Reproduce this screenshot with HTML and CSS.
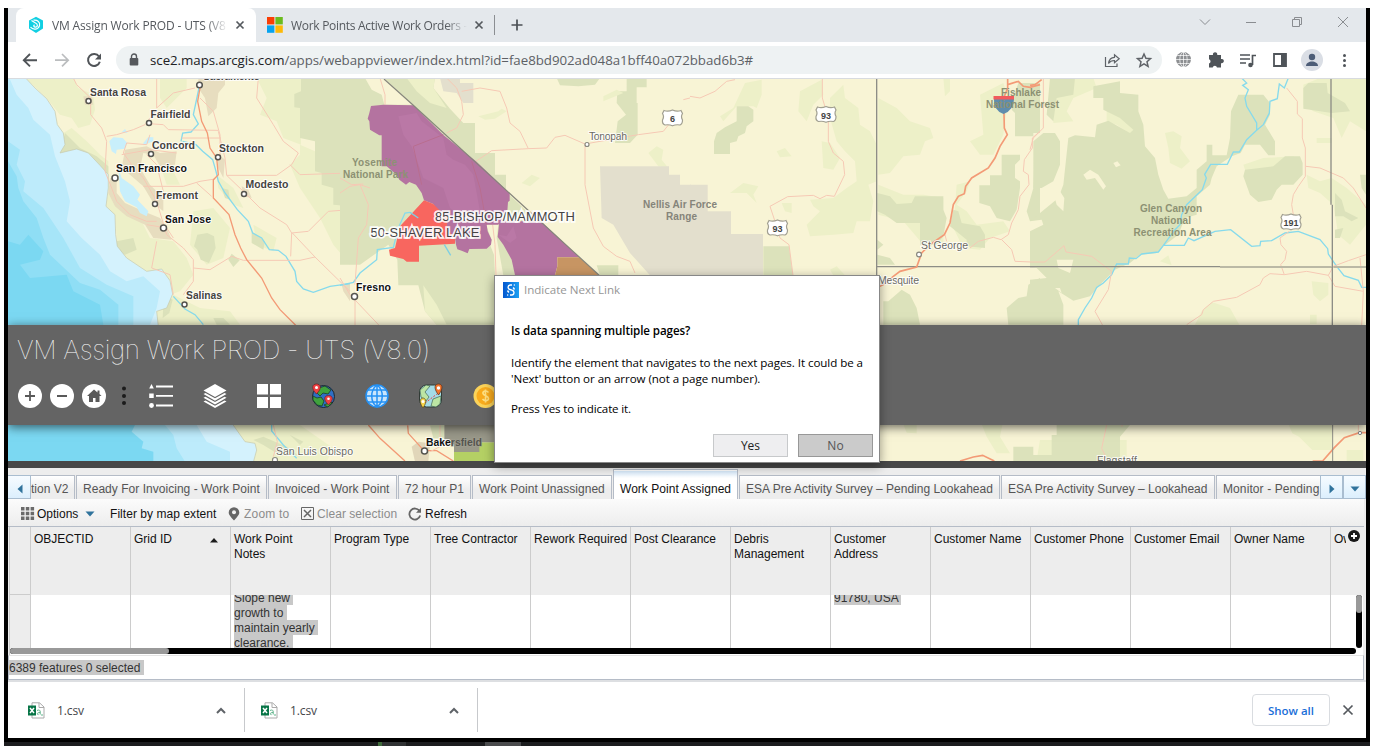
FILE: index.html
```html
<!DOCTYPE html>
<html lang="en">
<head>
<meta charset="utf-8">
<title>VM Assign Work PROD - UTS (V8.0)</title>
<link rel="stylesheet" href="styles.css">
</head>
<body>
<div class="browser">
  <header class="tabstrip">
    <div class="btab active">
      <svg class="fav" width="16" height="18" viewBox="0 0 16 18"><path d="M1 4.500 8 .8l7 3.700v8L8 17l-7-4.500z" fill="#12cfe2"/><path d="M3.500 4.500l4 2.500c2.500 1 2.500 4 0 4.200-1.800 0-2.300-1.500-1-2.500M5.500 4.200c4-.5 7 2 6 5.500-1 4-6.500 4.500-9 1.500" fill="none" stroke="#fff" stroke-width="1.200"/></svg>
      <span class="btitle t1">VM Assign Work PROD - UTS (V8</span>
      <svg class="x" width="10" height="10" viewBox="0 0 10 10"><path d="M1.500 1.500l7 7m0-7l-7 7" stroke="#55595e" stroke-width="1.700"/></svg>
    </div>
    <div class="btab second">
      <svg class="fav" width="16" height="16" viewBox="0 0 16 16"><path fill="#f93e05" d="M0 0h7.400v7.400H0z"/><path fill="#6abb1e" d="M8.400 0h7.400v7.400H8.400z"/><path fill="#06a3ef" d="M0 8.400h7.400v7.400H0z"/><path fill="#fdb907" d="M8.400 8.400h7.400v7.400H8.400z"/></svg>
      <span class="btitle t2">Work Points Active Work Orders -</span>
      <svg class="x" width="10" height="10" viewBox="0 0 10 10"><path d="M1.500 1.500l7 7m0-7l-7 7" stroke="#55595e" stroke-width="1.700"/></svg>
    </div>
    <svg class="plus" width="14" height="14" viewBox="0 0 14 14"><path d="M7 1.500v11M1.500 7h11" stroke="#4b4f54" stroke-width="1.700"/></svg>
    <svg class="winctl" width="160" height="16" viewBox="1195 14 160 16" fill="none" stroke="#8a8d91"><path d="M1200 19.500l5 5 5-5M1246 22.500h10M1292.500 19.500h7v7h-7zM1294.500 19v-1.500h7v7h-2M1338 17l10 10m0-10l-10 10"/></svg>
  </header>
  <div class="urlbar">
    <svg class="nav" width="100" height="30" viewBox="14 45 100 30" fill="none"><path d="M37 60.200H24m6-6.200l-6.200 6.200 6.200 6.200" stroke="#505458" stroke-width="1.900"/><path d="M55 60.200h13m-6-6.200l6.200 6.200-6.200 6.200" stroke="#bbbdbf" stroke-width="1.700"/><path d="M99 56.500a6 6 0 1 0 .8 5.200" stroke="#505458" stroke-width="2"/><path d="M101 53.500v6h-6z" fill="#505458"/></svg>
    <div class="omnibox">
      <svg width="10" height="14" viewBox="0 0 10 14"><rect x=".7" y="5" width="8.600" height="7.500" rx="1" fill="#56595d"/><path d="M2.500 6V3.500a2.500 2.500 0 0 1 5 0V6" fill="none" stroke="#56595d" stroke-width="1.400"/></svg>
      <span class="url"><b>sce2.maps.arcgis.com</b>/apps/webappviewer/index.html?id=fae8bd902ad048a1bff40a072bbad6b3#</span>
      <svg class="oicons" width="50" height="18" viewBox="1103 51 50 18" fill="none" stroke="#5f6368" stroke-width="1.200"><path d="M1105.500 57v9.500h11.500v-3M1108.500 63.500c.5-4 3-6 6-6.200v-2.500l4.700 4-4.700 4v-2.300c-3-.1-4.500.8-6 3z"/><path d="M1144 54l1.900 4.300 4.600.4-3.500 3.100 1.100 4.600-4.100-2.500-4.100 2.500 1.100-4.600-3.500-3.100 4.600-.4z" stroke-width="1.500"/></svg>
    </div>
    <svg class="ext" width="186" height="26" viewBox="1170 47 186 26"><g fill="none" stroke="#fff" stroke-width=".7"><circle cx="1183.500" cy="59.500" r="7.500" fill="#8d8f92" stroke="none"/><ellipse cx="1183.500" cy="59.500" rx="3.700" ry="7.300"/><path d="M1183.500 52v15M1176 59.500h15M1177.500 55.500h12M1177.500 63.500h12"/></g><path fill="#4f5459" d="M1210 55h3a2.200 2.200 0 1 1 4.200 0h3.800v4a2.200 2.200 0 1 1 0 4.200v4.300h-4a2.200 2.200 0 0 0-4.300 0H1209v-4a2.200 2.200 0 0 0 0-4.200V55z"/><path d="M1240 55h10M1240 59h10M1240 63h6M1252.500 65V55.500h3.500" fill="none" stroke="#4f5459" stroke-width="1.700"/><circle cx="1250.500" cy="65" r="2.300" fill="#4f5459"/><path d="M1274 54h12v12h-12z" fill="none" stroke="#4f5459" stroke-width="1.800"/><path d="M1281 54h5v12h-5z" fill="#4f5459"/><circle cx="1312" cy="60" r="11" fill="#dadee5"/><circle cx="1312" cy="57" r="3.200" fill="#4d5d77"/><path d="M1306 66c0-6 12-6 12 0z" fill="#4d5d77"/><g fill="#4f5459"><circle cx="1344.500" cy="55.500" r="1.500"/><circle cx="1344.500" cy="60.500" r="1.500"/><circle cx="1344.500" cy="65.500" r="1.500"/></g></svg>
  </div>

  <main class="map">
    <svg class="basemap" width="1358" height="382" viewBox="8 79 1358 382">
      <rect x="8" y="79" width="1358" height="382" fill="#f8f4d5"/>
      <!-- California: ocean and terrain -->
      <g transform="translate(0 78) scale(.33333)">
        <g fill="#edf0c8">
          <path d="M77 0H220L235 30 280 50 285 95 270 140 235 150 215 120 180 110 140 60z"/>
          <path d="M190 165L215 150 260 190 300 230 325 250 325 290 265 225 180 225z"/>
          <path d="M325 345L345 345 360 380 420 420 450 480 520 490 560 540 580 590 540 640 510 650 485 575 440 580 380 540 352 500 345 410 318 385z"/>
          <path d="M700 0L770 0 800 60 780 110 830 130 850 180 903 200V0zM900 200L945 220 970 280 1025 340 1050 385V560L1000 500 960 420 900 330 870 260 900 230z"/>
          <path d="M580 400L640 390 690 450 670 540 620 560 570 500zM650 290L700 330 730 390 700 380 655 330zM480 260L520 280 540 320 500 320zM470 700L520 650 600 690 690 700 720 740H470z"/>
          <path d="M760 440L830 480 820 520 770 500zM480 0H560V30L500 90 480 60z"/>
        </g>
        <g fill="#dce2bb"><path d="M903 0H1050V385L1000 380V330L965 320V285L945 280V190L900 180V90L883 88V48L903 40z"/><path d="M592 470l30-5 20 10 5 35-20 45-25-10-10-30-10-10zM755 460l40 30-5 25-35-20zM685 545l10-18 24 20-19 20z"/><path d="M350 490l50-10 10 35-35 15-25-10zM665 330l20 5 5 30-15-5zM195 165L240 210 290 235 325 265 325 290 265 225 180 225zM490 680l20-20 8 5-10 40-20 15zM640 720l30 0 20 20h-40z"/></g>
        <g fill="#e7ddbf"><path d="M595 0h80v20l-20 25-5 45-25 25-10-55-20-30zM330 300L350 300 350 345 375 375 430 400 480 420 500 450 515 485 460 480 435 440 380 415 345 385 325 345zM375 215L440 205 480 225 530 220 525 260 480 265 460 230 430 225 420 270 450 320 490 360 490 400 460 375 430 325 390 290 365 270zM250 55l25 0 5 25-25 0z"/><path d="M650 225l25 20-5 55-15-30zM725 325l20 10 10 25-25-5zM1025 620l25-5v55l-20-30z"/></g>
        <path fill="#d4f2fd" stroke="#c5c9ac" stroke-width="2" d="M77 0L105 30 140 62 165 100 172 140 190 165 195 200 180 225 230 213 265 225 300 262 325 290 325 330 318 385 345 410 347 470 352 505 380 540 440 580 485 573 510 608 518 648 500 690 470 700 475 745 20 745V0z"/>
        <path fill="#bdebfb" d="M24 0H28L50 50 85 90 100 125 150 170 165 235 195 310 210 370 200 430 245 480 300 530 330 580 380 610 430 595 480 640 470 690 450 740H24z"/>
        <path fill="#a6e5f8" d="M24 190L60 215 50 260 75 310 70 340 130 390 190 480 240 570 320 620 400 655 400 740H24z"/>
        <path fill="#8fdef5" d="M24 250L50 295 55 330 70 370 110 420 130 480 150 530 240 615 300 635 355 680 355 740H24z"/>
        <path fill="#7bd8f2" d="M24 490L60 500 85 470 130 520 120 545 60 560 90 600 200 590 220 640 300 680 310 740H24z"/>
        <path fill="#c8effb" d="M328 190L340 178 368 180 382 195 375 212 350 215 348 228 335 220zM355 270L365 300 400 325 420 350 412 365 445 400 440 415 420 405 410 388 375 370 360 340 358 310zM430 195L445 177 460 178 460 190 430 202zM365 163L375 153 383 165z"/>
        <g fill="none" stroke="#86daec" stroke-width="4"><path d="M597 30L580 110 595 138 573 162 548 165 543 190M548 190L588 200 608 220 638 245 648 280 655 310 675 345 712 395 745 430 758 465 785 480 808 515 835 517 858 535 885 580 890 610 910 633 940 643 990 625 1050 617M520 655L555 693 585 710 610 740"/></g>
        <g fill="none" stroke="#f6c9b5" stroke-width="3"><path d="M220 0L230 20 272 60V110L305 150 320 190 315 280 335 330 350 370 390 410 440 430 470 430M470 0V90L520 45 585 30M470 95L435 140 400 155 350 170 320 175M447 137L490 140 505 155 655 157M545 180H663M655 160L675 240 680 292H830L875 260 895 225 850 190 820 140 770 60 775 0M680 292L735 345 780 390 860 440 875 465 925 460 985 400 1050 395M450 170L440 200 380 195 370 225 395 260 430 300 470 370 485 420 500 470 550 510 580 545V610L550 650M430 325H550L600 310 645 303M590 315L635 355M600 60L640 100 660 170V235M580 570L630 575 695 535 730 547H900L945 537 1050 640M875 465L872 535M877 465L945 537M470 490L455 570 510 590 520 650M440 440L500 450 520 480M365 230L450 215 530 225M440 230L470 260 490 340M870 260L900 290 1050 285"/></g>
        <path fill="none" stroke="#f39a76" stroke-width="4" d="M600 30L593 70 605 130 622 165 630 210 650 240 655 290 640 305 640 360 687 410 705 470 722 510 740 545 785 600 815 660 840 695 890 745"/>
      </g>
      <!-- Sierra Nevada and western Nevada -->
      <g transform="translate(340 78) scale(.33333)">
        <path fill="#dce2bb" d="M0 0H285L280 30 330 92 370 135H405V225H465V290H498V340L560 400 606 432 500 440 525 592H470V740H290L255 700 235 622H175L172 545 145 500 60 560H0zM650 0H780L765 20 715 25 660 22zM860 0H920V28H890V75H893V170L870 195H825L833 130 858 110 830 75 832 40H860zM770 562H835V592H780z"/>
        <path fill="#f8f4d5" d="M75 0H132L218 80H133L125 50 95 35zM438 440H475L470 480 490 592H465L462 530 450 500 455 485z"/>
        <path fill="#edf0c8" d="M415 115L475 100 485 92 500 100 465 122 435 125zM545 315L575 290 600 300 570 325zM925 225L950 205 970 215 965 245 985 270 955 265zM250 622L290 680 320 740H290L255 700zM790 55L830 35 850 45 790 70zM200 0H285L280 30 320 90 270 75 230 40z"/>
        <g fill="#e3dfcd"><path d="M300 0H360V15H400V75H370L350 45 310 40zM780 265H987V290H1020V320H1053V592H930L870 525 820 440 785 420z"/></g>
        <path fill="none" stroke="#86daec" stroke-width="4" d="M0 622L40 613 60 585 110 545 112 515 160 508 175 450 195 405 210 403"/>
        <g fill="none" stroke="#f6c9b5" stroke-width="3"><path d="M120 0L135 50V80M320 0L350 30 365 70 370 110 350 150 320 165M365 40L420 30 480 40 500 90 510 135 540 160 565 212 620 210 645 178 675 172 735 198 895 170 970 160 990 135M1030 65L1050 60M0 345L30 325 60 320 90 330M60 320L85 380 80 440 55 480 45 620M0 600L30 650 120 745M45 655V745M400 255L455 218 565 212M735 200L735 320 760 450 790 505 830 535 870 550 885 585M458 440L465 500 468 592M0 300L35 320 70 318"/></g>
        <path fill="#b473a0" d="M93 84L130 80 220 82 311 172 408 250 509 345V368L504 372 502 400 475 440H440L443 460 455 485 453 500 440 512 388 513 383 526 365 518 352 514 348 500 345 480 320 455 320 435 290 395 280 378 252 367 245 345 228 320 208 312 198 320 178 305 170 290 140 265 125 265V172H118L90 155 88 130 83 122 88 105zM478 430H603L718 538H652V565L645 592H525L515 545 490 500 473 477z"/>
        <path fill="#ba78a6" d="M175 115L230 105 245 130 310 180 320 230 340 245 375 260 400 290 420 400 410 440 380 430 330 390 310 330 250 300 215 205 190 170zM475 470L500 475 520 445 530 480 510 495z"/>
        <path d="M220 205L310 170M395 250L420 330 440 440M220 205L245 320" fill="none" stroke="#b96d8f" stroke-width="3"/>
        <path fill="#f8665f" d="M252 367L280 378 322 420 320 455 345 477V497L237 503V551H200L190 543 150 533 147 515 165 510 180 445z"/>
        <path fill="#c79563" d="M652 538H718L778 592H645L652 565z"/>
        <path d="M210 403L235 420M313 500L332 532" stroke="#7ecfe3" stroke-width="4" fill="none"/>
      </g>
      <!-- Eastern Nevada and south-western Utah -->
      <g transform="translate(690 78) scale(.33333)">
        <path fill="#edf0c8" d="M165 15L215 5 215 50 200 90 190 85 175 85 140 85 100 130 90 115 130 90zM330 40L395 5 400 50 370 80 350 130 325 100zM420 60L460 20 465 60 505 90 510 140 540 160 560 200 560 310 535 320 550 370 540 430 500 430 490 465 430 470 360 475 350 440 390 400 370 385 360 365 430 360 470 330 500 310 495 250 465 220 440 190 420 120zM395 190L420 195 450 240 430 275 400 270zM120 345L160 315 205 325 190 350 200 375 170 345zM260 220L285 210 305 235 270 238zM565 60L620 90 660 130 720 150 730 180 705 190 690 230 640 235 600 285 565 290zM565 320L640 350 700 350 760 360 760 500 700 500 640 430 565 410zM870 50L940 15 955 60 940 170 910 230 870 230 840 190 880 170zM760 0H780V40L765 55zM800 320L840 310 830 340 800 380 830 400 860 440 940 430 960 460 900 480 870 515 820 510 790 450zM275 375H305V405L285 400zM420 575L440 565 465 592H430z"/>
        <g fill="#dce2bb"><path d="M140 85H175L190 95V130L170 145 165 165 145 175 140 190 120 195V228H72V190L80 165 105 148 140 130zM562 345L600 355 620 378 665 375 675 355H760V395L770 420 760 475 740 500H690V435L620 435 585 410 562 400zM790 395L805 400 815 435 870 445 885 470V510L830 505V485L780 445zM935 230H990V245L975 260V300L990 310V330L980 395 960 430 920 420 900 385 868 375V322H900V292H935zM970 60L985 15H1050V165H1030V175H975V105L965 95zM1035 200L1050 195V430H1020L1010 400 1030 330zM562 485L580 500 562 515zM562 530L600 540 615 560H562zM595 670L635 635 660 650 680 690 690 740H580V670zM955 740L950 690 985 660 1010 655 1015 620 1050 600V740z"/><path d="M220 505H297L309 592H220z"/></g>
        <path fill="#e3dfcd" d="M0 320H53V400H123V468H219V592H0z"/>
        <g fill="none" stroke="#f6c9b5" stroke-width="3"><path d="M0 55L30 60 75 40 110 10 135 5M397 0V60L415 120V190L430 225 460 250 464 290 433 355 410 352 390 362 370 352 293 356 240 385 255 430 270 480 297 500 309 592M1050 160L1027 180V210L1003 245 1000 280 1015 290 1017 320 990 355 985 395 965 435 955 470 933 485 910 478 865 490 840 510M935 485L965 515 975 550 1050 553M765 470L770 490"/></g>
        <path fill="none" stroke="#8d8d86" stroke-width="4" d="M560 0V592M560 566H1050"/>
        <path fill="none" stroke="#f39a76" stroke-width="5" d="M953 0V30L941 60 943 150 952 170 930 205 915 240 895 270 845 300 827 325 823 347 805 355 790 380 780 435 763 470 720 500 695 525 680 567 630 580 610 595 580 620 565 627M953 20L985 10 1000 25 1020 28 1050 20"/>
      </g>
      <!-- South-eastern Utah and the Four Corners -->
      <g transform="translate(1030 78) scale(.33333)">
        <path fill="#edf0c8" d="M135 0H190L200 30 130 60 110 100 130 130 70 135 70 60zM230 100L260 110 310 150 305 170 260 140 230 130zM405 165L430 160 455 175 450 210 480 250 455 272 420 255 415 210zM640 260L700 240 790 235 810 260 740 290 650 290zM820 20L870 0H1008V160L960 130 935 180 910 120 850 100 820 80zM830 290L870 310 905 300 950 330 1008 380V440L960 500 925 470 910 380 870 345 835 330zM860 180H905V195H860zM845 610L895 615V650L870 670 850 650zM515 700L545 672 600 690 628 740H495zM390 550L415 532 425 562zM840 710H860V738H840z"/>
        <path fill="#dce2bb" d="M60 0H135L130 50 80 60 70 130 50 110zM190 0L190 25 270 10V45L325 50 325 100 340 140 345 205 375 240 385 290 400 335 415 362 470 355 500 330V275L530 250V200H547V232H590L600 180 603 100 625 50H700L720 75V110L705 140 735 190V232H715L690 200H645L632 225 605 235 560 265 545 300 540 320 500 355V410L465 420 445 470 400 505 380 525 330 530 300 555 255 575 215 615 180 655 130 668 85 640 100 680V740H0V605L50 600 20 570 0 565V430L85 360 100 320 115 180 135 172 195 178 200 140 235 128 300 165 310 155 270 120 220 95V60H190V30zM10 190L40 165H75L90 190V260L70 310 35 330H10zM645 275L730 265 765 235H810L818 255V290L790 320H755L740 335 725 365 685 372 660 350 640 295zM915 345L935 365 945 400 985 420 965 430 940 415H915zM820 30L835 15H890L893 45 945 75 960 100 905 105 870 100 820 92zM990 290H1008V350L995 330zM915 455L940 450 930 480H915z"/>
        <path fill="#f8f4d5" d="M250 255L262 250 272 262 258 268zM160 290L180 275 205 290 228 325 220 335 195 300 170 305zM70 345L90 340 103 360 100 400 80 380zM0 430L35 425 40 440 0 460zM80 545H130L120 585 85 570zM75 630L90 630 95 645z"/>
        <g fill="none" stroke="#86daec" stroke-width="4"><path d="M635 0L650 15 638 22 655 35 645 60 650 85 680 135V157L650 185 628 222H610L592 259H542L524 289 529 300 517 335 470 380 455 410 450 440 435 455 420 475 398 505 385 522 335 528 318 542 298 540 295 558 260 558 245 590 220 615 200 628 185 660 165 690 145 725V742M680 157L700 140 718 105 720 70 742 62 748 18 763 30 775 0M400 502H463L475 480 492 488 555 460 602 455 665 505 690 503 692 490 725 488 765 465 805 460 870 485 893 512 895 528 920 565 942 593 985 607 995 628H1008"/></g>
        <g fill="none" stroke="#f6c9b5" stroke-width="3"><path d="M40 0V150L10 180 0 215M770 30L802 70V108L817 122V180L826 210V295L805 325 790 350 785 380 790 410M778 460L750 480 753 500 770 520 765 545 752 560 763 590M828 265L870 270 940 300 970 330 1008 390M470 740L515 710 520 695 550 670 620 658 690 620 700 600 720 587 763 590 830 580 895 592 915 625 1000 640M895 592L910 565 955 548 1008 530M0 552H45L102 503 108 522 185 535 245 580 235 635 195 700 218 742M990 540L1000 640 995 742"/></g>
        <path fill="none" stroke="#8d8d86" stroke-width="4" d="M903 0V380M907 380V742M0 566H570M570 568H908"/><path stroke="#bbb9a5" stroke-width="6" fill="none" d="M570 567H905M910 567H1008"/>
        <path fill="none" stroke="#f39a76" stroke-width="5" d="M0 22L15 20 35 5"/>
      </g>
      <!-- Coast and valley south of the header bar -->
      <g transform="translate(0 325) scale(.33333)">
        <path fill="#edf0c8" d="M700 300H900L1000 370 980 410H760z"/>
        <path fill="#dce2bb" d="M760 345L790 335 860 365 900 395 870 385 830 385 790 360zM870 330L910 350 900 360z"/>
        <path fill="#d4f2fd" stroke="#c5c9ac" stroke-width="2" d="M20 295H696L735 350 765 355 770 375 760 412H20z"/>
        <path fill="#bdebfb" d="M24 300H590L620 350 690 380 690 410H24z"/><path fill="#a6e5f8" d="M24 300H495L520 330 530 370 555 410H24z"/><path fill="#7bd8f2" d="M24 300H405L395 320 430 350 425 370 460 380V410H24z"/>
        <path fill="#e1d6b9" d="M1235 365l20-15 35 5-5 55h-40z"/><path fill="#dce2bb" d="M1290 300H1333V340H1300z"/><path fill="#b4d064" d="M1362 352h126v60h-126z"/><path fill="#999889" d="M1333 300H1488V352H1438V381H1362V358H1333z"/>
        <path stroke="#86daec" stroke-width="4" fill="none" d="M815 300V318L850 360 890 400"/><path stroke="#f39a76" stroke-width="4" fill="none" d="M1105 300L1140 340 1215 408M1223 300L1225 325 1272 377H1310L1360 408"/><path stroke="#f6c9b5" stroke-width="3" fill="none" d="M820 300L832 350 820 395M1110 300H1290M1320 300V365L1290 380"/>
      </g>
      <!-- Northern Arizona -->
      <g transform="translate(870 420) scale(.33333)">
        <path fill="#edf0c8" d="M330 0h70l-10 50 30 50h-40l-30-50zM510 60h260v60H500zM1250 0h137v90l-60 0-40-40-20-10zM1430 90h50v33h-50zM95 0H140V40L110 38z"/><path fill="#dce2bb" d="M560 15H780L750 50V123H430V80H490V105H545V45H560z"/>
        <path fill="none" stroke="#f6c9b5" stroke-width="3" d="M710 15l-15 70 10 20M756 0v20M1465 0v35"/><path fill="none" stroke="#f39a76" stroke-width="5" d="M270 123l40-12 28-5 35 17M1328 123h30l35-40 30-30 45-15h20"/><path fill="none" stroke="#8d8d86" stroke-width="3" d="M1388 0v123"/>
        <circle cx="1470" cy="39" r="5" fill="#fff" stroke="#888" stroke-width="3"/>
      </g>
      <path d="M384 79L413 105 600 276" stroke="#86867c" stroke-width="1.200" fill="none"/>
      <g fill="#fff" stroke="#55544f" stroke-width="1.500"><circle cx="88.500" cy="101" r="2.500"/><circle cx="199.500" cy="85" r="2.800"/><circle cx="149" cy="123" r="2.500"/><circle cx="151" cy="154" r="2.500"/><circle cx="218" cy="157.300" r="2.500"/><circle cx="115" cy="178" r="3"/><circle cx="244" cy="194" r="2.500"/><circle cx="155" cy="204" r="2.500"/><circle cx="163.500" cy="228" r="3"/><circle cx="184.500" cy="304.500" r="2.500"/><circle cx="354.500" cy="296.500" r="3"/><circle cx="424.500" cy="451" r="3"/><g stroke="#88877e" stroke-width="1.200"><circle cx="587" cy="144.500" r="2"/><circle cx="919" cy="254.500" r="2.400"/><circle cx="275" cy="460" r="2.500"/></g></g>
      <g fill="#fff" stroke="#a19f91" stroke-width="1.200"><path d="M664 110.500q4 1.500 8.500-.5 4.500 2 8.500.5l1.500 3q-2 3 0 6.500 0 4-2.500 5-4-.8-7.500.8-3.500-1.600-7.500-.8-3-1-2.500-5 2-3.500 0-6.500z"/><path transform="translate(153.500 -3.500)" d="M664 110.500q4 1.500 8.500-.5 4.500 2 8.500.5l1.500 3q-2 3 0 6.500 0 4-2.500 5-4-.8-7.500.8-3.500-1.600-7.500-.8-3-1-2.500-5 2-3.500 0-6.500z"/><path transform="translate(105 110)" d="M664 110.500q4 1.500 8.500-.5 4.500 2 8.500.5l1.500 3q-2 3 0 6.500 0 4-2.500 5-4-.8-7.500.8-3.500-1.600-7.500-.8-3-1-2.500-5 2-3.500 0-6.500z"/><path transform="translate(618.500 104)" d="M664 110.500q4 1.500 8.500-.5 4.500 2 8.500.5l1.500 3q-2 3 0 6.500 0 4-2.500 5-4-.8-7.500.8-3.500-1.600-7.500-.8-3-1-2.500-5 2-3.500 0-6.500z"/></g>
      <path d="M994 99h20q0 11-10.500 15Q993 110 994 99z" fill="#5f8dad"/><path d="M993.500 96h20.500v3.500h-20.500z" fill="#f15b5d"/>
      <g class="shield"><text x="672.500" y="122">6</text><text x="826" y="118.500">93</text><text x="777.500" y="232">93</text><text x="1291" y="226">191</text></g>
      <g class="lbl city"><text x="90" y="96" textLength="56">Santa Rosa</text><text x="203" y="79.500" textLength="57">Sacramento</text><text x="150.500" y="118" textLength="40">Fairfield</text><text x="152" y="149" textLength="43">Concord</text><text x="219" y="152" textLength="45">Stockton</text><text x="245.500" y="188" textLength="43">Modesto</text><text x="156" y="198.500" textLength="42">Fremont</text><text x="186" y="299" textLength="36">Salinas</text></g>
      <g class="lbl major"><text x="116" y="172" textLength="71">San Francisco</text><text x="165" y="222.500" textLength="46">San Jose</text><text x="356" y="291" textLength="35">Fresno</text><text x="426" y="445.500" textLength="56"><tspan>Bake</tspan><tspan class="faded">rsfield</tspan></text></g>
      <g class="lbl town"><text x="589" y="139.500" textLength="38">Tonopah</text><text x="921" y="249" textLength="47">St George</text><text x="878" y="284" textLength="41">Mesquite</text><text x="276" y="454.500" textLength="77">San Luis Obispo</text><text x="1097" y="464" textLength="40">Flagstaff</text></g>
      <g class="park"><text x="352" y="165.500" textLength="45">Yosemite</text><text x="343" y="178" textLength="65">National Park</text><text x="1001" y="96" textLength="40">Fishlake</text><text x="986" y="108" textLength="73">National Forest</text><text x="1140" y="211.500" textLength="62">Glen Canyon</text><text x="1151" y="223.500" textLength="40">National</text><text x="1133.500" y="235.500" textLength="78">Recreation Area</text></g>
      <g class="park base"><text x="643" y="207.500" textLength="74">Nellis Air Force</text><text x="666" y="219.500" textLength="31">Range</text></g>
      <g class="zone"><text x="435" y="221" textLength="140">85-BISHOP/MAMMOTH</text><text x="370.500" y="237" textLength="109">50-SHAVER LAKE</text></g>
    </svg>

    <section class="apphead">
      <h1>VM Assign Work PROD - UTS (V8.0)</h1>
      <svg class="tools" width="490" height="30" viewBox="8 381 490 30">
        <g fill="#fff"><circle cx="30" cy="396" r="12"/><circle cx="62" cy="396" r="12"/><circle cx="94" cy="396" r="12"/></g>
        <path d="M25 396h10m-5-5v10M57 396h10" stroke="#595959" stroke-width="1.800"/><path d="M94 389.500l-7 6.500h2v6h4v-4h2.500v4h4v-6h2l-2-2v-3.500h-2v2z" fill="#595959"/>
        <g fill="#1b1b1b"><circle cx="124" cy="388.500" r="2"/><circle cx="124" cy="396" r="2"/><circle cx="124" cy="403" r="2"/></g>
        <path d="M156 386.500h17M156 395.800h17M156 405.500h17" stroke="#fff" stroke-width="1.800"/><path fill="#fff" d="M151.500 384l2.300 4.500h-4.600zM149.200 393.500h4.500v4.500h-4.500z"/><circle cx="151.500" cy="405.500" r="2.400" fill="#fff"/>
        <g fill="#fff"><path d="M215 384l11.500 6.500-11.500 6.500-11.500-6.500zM203.500 394l2-1 9.500 5.300 9.500-5.300 2 1-11.500 6.700zM203.500 397.700l2-1 9.500 5.300 9.500-5.300 2 1-11.500 6.700zM203.500 401.400l2-1 9.500 5.300 9.500-5.300 2 1-11.500 6.700z"/><path d="M257 384h11v10.500h-11zM270 384h11v10.500h-11zM257 397h11v11h-11zM270 397h11v11h-11z"/></g>
        <circle cx="323.500" cy="396.500" r="11" fill="#2f6fc4" stroke="#1d2630" stroke-width="1"/><path d="M313 396l4 2 4-1 3 4-2 5-5-1-4-5zM319 388l6-2 6 4-3 4-5-1-3 3-3-3zM324 405l7-3 1 1-4 4z" fill="#40a23d" stroke="#1c3d27" stroke-width=".8"/><path d="M316.500 394c-6-6-4-10 0-10s6 4 0 10zM328.500 405c-6-6-4-9.500 0-9.500s6 3.500 0 9.500z" fill="#ef4043" stroke="#6a1a1a" stroke-width=".6"/><g fill="#fff"><circle cx="316.500" cy="387.500" r="1.500"/><circle cx="328.500" cy="398.800" r="1.300"/></g>
        <circle cx="377" cy="396" r="11" fill="#c9e5fc" stroke="#2491f4" stroke-width="1.500"/><path d="M377 385v22M366 396h22M368 390h18M368 402h18M377 385c-7 5-7 17 0 22 7-5 7-17 0-22" stroke="#2491f4" stroke-width="1.500" fill="none"/>
        <rect x="419.500" y="385" width="22" height="22" rx="7" fill="#a4dbe6" stroke="#313a35"/><path d="M420 390l6-5 4 1-5 6 4 5-3 4-5-4zM431 406l2-7 8-3-1 8-4 3z" fill="#bce5a4" stroke="#446451" stroke-width=".7"/><path d="M425 403l12-9" stroke="#e4434b" stroke-dasharray="2 1.500"/><path d="M438.500 395c-6-8-3-11 0-11s6 3 0 11z" fill="#f3752c" stroke="#5a2c15" stroke-width=".7"/><path d="M423 408c-5-7-2-10 0-10s5 3 0 10z" fill="#f7d54a" stroke="#57491a" stroke-width=".7"/><g fill="#fff"><circle cx="438.500" cy="388" r="1.700"/><circle cx="423" cy="401.500" r="1.500"/></g>
        <circle cx="485.500" cy="396" r="12" fill="#fbd35a"/><circle cx="485.500" cy="396" r="9" fill="#f9ab1d"/><path d="M488.500 392.500c-2-2.500-6-1.500-5.500 1 .5 2.700 5.500 2 5.500 5 0 2.500-4 3-6 .5M485.500 389.500v13" stroke="#ffe082" stroke-width="1.600" fill="none"/>
      </svg>
    </section>
  </main>
  <div class="splitter"></div>

  <section class="panel">
    <nav class="ptabs">
      <span class="arrow left"><svg width="6" height="10" viewBox="0 0 6 10"><path d="M5.500 .5v9L.5 5z" fill="#30739c"/></svg></span>
      <span class="pt w1">tion V2</span><span class="pt w2">Ready For Invoicing - Work Point</span><span class="pt w3">Invoiced - Work Point</span><span class="pt w4">72 hour P1</span><span class="pt w5">Work Point Unassigned</span><span class="pt w6 sel">Work Point Assigned</span><span class="pt w7">ESA Pre Activity Survey – Pending Lookahead</span><span class="pt w8">ESA Pre Activity Survey – Lookahead</span><span class="pt w9">Monitor - Pending</span>
      <span class="arrow"><svg width="6" height="10" viewBox="0 0 6 10"><path d="M.5 .5v9l5-4.500z" fill="#30739c"/></svg></span><span class="arrow last"><svg width="10" height="6" viewBox="0 0 10 6"><path d="M.5 .5h9L5 5.500z" fill="#30739c"/></svg></span>
    </nav>
    <div class="ptools">
      <svg class="g1" width="14" height="13" viewBox="0 0 14 13" fill="#6a6a6a"><path d="M0 0h3.500v3.500H0zM4.800 0h3.500v3.500H4.800zM9.600 0h3.500v3.500H9.600zM0 4.700h3.500v3.500H0zM4.800 4.700h3.500v3.500H4.800zM9.600 4.700h3.500v3.500H9.600zM0 9.400h3.500v3.500H0zM4.800 9.400h3.500v3.500H4.800zM9.600 9.400h3.500v3.500H9.600z"/></svg>
      <span class="o1">Options</span><svg class="g2" width="10" height="6" viewBox="0 0 10 6"><path d="M.5 .5h9L5 5.500z" fill="#30739c"/></svg>
      <span class="o2">Filter by map extent</span>
      <svg class="g3" width="12" height="14" viewBox="0 0 12 14"><path d="M6 13.500C2 9 .7 7.500.7 5.500a5.300 5.300 0 0 1 10.600 0C11.300 7.500 10 9 6 13.500z" fill="#666"/><circle cx="6" cy="5.200" r="2" fill="#f3f3f3"/></svg><span class="o3 dim">Zoom to</span>
      <svg class="g4" width="13" height="13" viewBox="0 0 13 13" fill="none" stroke="#666"><path d="M.5 .5h12v12H.5z"/><path d="M3 3l7 7m0-7l-7 7" stroke-width="1.500"/></svg><span class="o4 dim">Clear selection</span>
      <svg class="g5" width="14" height="14" viewBox="0 0 14 14"><path d="M11.500 4a5.500 5.500 0 1 0 .7 4.500" fill="none" stroke="#666" stroke-width="1.800"/><path d="M13 .8v5H8z" fill="#666"/></svg><span class="o5">Refresh</span>
    </div>
    <div class="grid">
      <div class="ghead"><span class="rowh"></span><span>OBJECTID</span><span>Grid ID<svg class="sort" width="8" height="5" viewBox="0 0 8 5"><path d="M4 0l4 4.500H0z" fill="#1c1c1c"/></svg></span><span>Work Point Notes</span><span>Program Type</span><span>Tree Contractor</span><span class="nw wide">Rework Required</span><span>Post Clearance</span><span>Debris Management</span><span>Customer Address</span><span class="nw">Customer Name</span><span class="nw">Customer Phone</span><span class="nw">Customer Email</span><span>Owner Name</span><span class="cut">Ow</span>
        <svg class="add" width="12" height="12" viewBox="0 0 12 12"><circle cx="6" cy="6" r="6" fill="#171717"/><path d="M6 3v6M3 6h6" stroke="#fff" stroke-width="1.800"/></svg>
      </div>
      <div class="grow"><span class="rowh"></span><span></span><span></span><span class="notes"><mark>Slope new </mark><mark>growth to </mark><mark>maintain yearly </mark><mark>clearance. </mark></span><span></span><span></span><span></span><span></span><span></span><span class="notes"><mark>91780, USA </mark></span><span></span><span></span><span></span><span></span><span class="end"></span><i class="vscroll"><i></i></i></div>
      <div class="hscroll"><i></i></div>
    </div>
    <div class="status"><mark>6389 features 0 selected </mark></div>
  </section>

  <footer class="downloads">
    <div class="dl"><svg width="17" height="17" viewBox="0 0 17 17"><path d="M4 .8h7.500L16 5v11H4z" fill="#fff" stroke="#aaa"/><path d="M11 1v4.500h5" fill="none" stroke="#aaa"/><path d="M0 3.500h8v10H0z" fill="#087547"/><path d="M2 6l4 5m0-5l-4 5" stroke="#fff" stroke-width="1.500"/><path d="M9 8.500c2-1 3.500-.3 3.200 1.500v2.500m0-2c-3-.2-4 2-1.700 2.200M14 12v2" fill="none" stroke="#5fb48b"/></svg><span>1.csv</span><svg class="chev" width="10" height="7" viewBox="0 0 10 7"><path d="M1 6l4-4 4 4" fill="none" stroke="#5f6368" stroke-width="2"/></svg></div>
    <div class="dl"><svg width="17" height="17" viewBox="0 0 17 17"><path d="M4 .8h7.500L16 5v11H4z" fill="#fff" stroke="#aaa"/><path d="M11 1v4.500h5" fill="none" stroke="#aaa"/><path d="M0 3.500h8v10H0z" fill="#087547"/><path d="M2 6l4 5m0-5l-4 5" stroke="#fff" stroke-width="1.500"/><path d="M9 8.500c2-1 3.500-.3 3.200 1.500v2.500m0-2c-3-.2-4 2-1.700 2.200M14 12v2" fill="none" stroke="#5fb48b"/></svg><span>1.csv</span><svg class="chev" width="10" height="7" viewBox="0 0 10 7"><path d="M1 6l4-4 4 4" fill="none" stroke="#5f6368" stroke-width="2"/></svg></div>
    <button class="showall">Show all</button>
    <svg class="close" width="12" height="12" viewBox="0 0 12 12"><path d="M1.500 1.500l9 9m0-9l-9 9" stroke="#55595e" stroke-width="1.700"/></svg>
  </footer>
</div>
<div class="taskbar"><i class="green"></i><i class="dark"></i><i class="light"></i></div>

<div class="dialog">
  <div class="dtitle"><svg width="16" height="16" viewBox="0 0 16 16"><defs><linearGradient id="lg"><stop stop-color="#0457cf"/><stop offset="1" stop-color="#1ba0f2"/></linearGradient></defs><path d="M0 0h16v16H0z" fill="url(#lg)"/><path d="M9 3H7.200C4.300 3.500 4.500 7.200 7 7.500l2 .7c2.700.6 2.700 4.300 0 4.800H7M10.800 3h1M5.200 13h-1M10.200 5.500l1.300 2M5.800 10.500l-1.300-2" fill="none" stroke="#fff" stroke-width="1.400"/></svg><span>Indicate Next Link</span></div>
  <strong>Is data spanning multiple pages?</strong>
  <p class="p1"><span>Identify the element that navigates to the next pages. It could be a</span><br>'Next' button or an arrow (not a page number).</p>
  <p class="p2">Press Yes to indicate it.</p>
  <div class="dbtns"><button>Yes</button><button class="no">No</button></div>
</div>
</body>
</html>
```

FILE: styles.css
```css
* { box-sizing: border-box; }
body { margin: 0; width: 1374px; height: 746px; padding: 8px 4px 0; background: #fff; overflow: hidden; font-family: "Liberation Sans", Arial, sans-serif; font-size: 12px; color: #111; }
svg { display: block; flex: none; }
i { display: block; font-style: normal; }
.browser { height: 734px; border: solid #000; border-width: 0 4px 4px; background: #fff; display: flex; flex-direction: column; }
.tabstrip, .urlbar, .downloads, .dialog, .dialog button { font-family: "Open Sans", "Noto Sans", sans-serif; }

/* browser chrome */
.tabstrip { height: 34px; flex: none; display: flex; align-items: center; background: #e4e8ec; padding-left: 8px; }
.btab { height: 34px; display: flex; align-items: center; }
.btab.active { width: 240px; background: #fff; border-radius: 8px 8px 0 0; padding-left: 12px; }
.btab.second { width: 239px; padding-left: 11px; border-right: 1px solid #8b8e92; height: 20px; }
.btitle { margin-left: 8px; white-space: nowrap; overflow: hidden; color: #55595e; font-size: 12px; -webkit-mask-image: linear-gradient(90deg, #000 88%, transparent); mask-image: linear-gradient(90deg, #000 88%, transparent); }
.t1 { width: 176px; letter-spacing: -.15px; }
.t2 { width: 176px; letter-spacing: -.3px; }
.btab .x { margin-left: 7px; }
.plus { margin-left: 15px; }
.winctl { margin-left: auto; margin-right: 11px; margin-top: -6px; }
.urlbar { height: 37px; flex: none; display: flex; align-items: center; border-bottom: 1px solid #d8dbdf; padding-left: 6px; }
.omnibox { margin-left: 2px; width: 1046px; height: 28px; border-radius: 14px; background: #eef2f3; display: flex; align-items: center; padding-left: 13px; }
.url { margin-left: 11px; font-size: 13.300px; letter-spacing: -.04px; color: #5d6165; white-space: nowrap; }
.url b { font-weight: 400; color: #202124; }
.oicons { margin-left: auto; margin-right: 9px; }
.ext { margin-left: 8px; }

/* map */
.map { height: 382px; flex: none; position: relative; overflow: hidden; }
.basemap text { font-size: 10px; }
.lbl text { paint-order: stroke; stroke: rgba(255,255,255,.8); stroke-width: 2px; font-size: 10.500px; }
.city text { font-weight: 700; fill: #45433f; }
.major text { font-weight: 700; fill: #111; }
.major .faded { fill: #55554f; stroke: #a3a296; stroke-width: 1px; }
.town text { fill: #6a6962; }
.park text { font-weight: 700; fill: #8c9173; }
.base text { fill: #85847a; }
.zone text { font-size: 13px; fill: #454345; paint-order: stroke; stroke: rgba(255,255,255,.9); stroke-width: 3.500px; }
.shield text { font-weight: 700; font-size: 9px; fill: #444; text-anchor: middle; }
.apphead { position: absolute; left: 0; top: 246px; width: 1358px; height: 100px; background: #646464; box-shadow: 0 2px 10px rgba(0,0,0,.6); }
h1 { margin: 0; padding: 6px 0 0 9px; font: 100 26px/38px Inter, Roboto, sans-serif; letter-spacing: -.3px; color: #fff; height: 56px; white-space: nowrap; }
.splitter { height: 7px; flex: none; background: #484848; }

/* attribute table */
.panel { height: 212px; flex: none; background: #ededed; border-right: 1px solid #ededed; }
.ptabs { height: 31px; display: flex; align-items: flex-end; }
.pt { height: 24px; flex: none; border: solid #b5bcc7; border-width: 1px 1px 0; padding: 0 6px; line-height: 27px; margin-right: 1px; white-space: nowrap; overflow: hidden; background: linear-gradient(#fff, #ededed 60%); color: #555; letter-spacing: .03px; box-shadow: inset 0 1px #fff; }
.w1 { width: 44px; padding: 0; border-left: 0; } .w2 { width: 191px; } .w3 { width: 129px; } .w4 { width: 73px; } .w5 { width: 140px; } .w6 { width: 125px; } .w7 { width: 261px; letter-spacing: 0; } .w8 { width: 214px; letter-spacing: 0; } .w9 { width: 104px; margin: 0; border-right: 0; letter-spacing: .1px; }
.sel { height: 30px; line-height: 38px; color: #111; background: linear-gradient(#cfe5f9, #fff 8px); }
.arrow { width: 23px; height: 24px; flex: none; display: flex; align-items: center; justify-content: center; background: linear-gradient(#f6fbff, #dceffd); border: 1px solid #a9bdd0; padding-top: 4px; }
.arrow.left { border-left: 0; padding-left: 1px; }
.ptools { height: 28px; display: flex; align-items: center; background: linear-gradient(#fbfbfb, #ededed); border-bottom: 1px solid #b5bcc7; padding: 2px 0 0 13px; width: 1356px; white-space: nowrap; }
.o1 { margin-left: 2px; width: 48px; } .g2 { width: 10px; }
.o2 { margin-left: 15px; width: 118px; letter-spacing: .05px; }
.o3 { margin-left: 4px; width: 57px; letter-spacing: .2px; }
.o4 { margin-left: 3px; width: 91px; letter-spacing: .05px; }
.o5 { margin-left: 3px; }
.ptools .dim { color: #8c8c8c; }
.grid { margin-left: 1px; width: 1354px; height: 128px; border-left: 1px solid #ccc; background: #fff; position: relative; }
.ghead, .grow { display: grid; grid-template-columns: 21px repeat(13, 100px) 32px; position: relative; }
.ghead { height: 68px; background: #ededed; line-height: 15px; }
.ghead > span, .grow > span { border-right: 1px solid #ccc; padding: 5px 3px 0; position: relative; overflow: hidden; }
.ghead .nw { white-space: nowrap; }
.ghead .wide { letter-spacing: .03px; }
.ghead .cut { width: 15px; border: 0; padding-right: 0; }
.ghead .rowh { border-bottom: 1px solid #ccc; }
.sort { position: absolute; right: 12px; top: 11px; }
.add { position: absolute; left: 1338px; top: 3px; }
.grow { height: 53px; }
.grow .rowh { background: #ededed; }
.grow .end { border: 0; }
.grow .notes { padding-top: 0; height: 53px; }
mark { display: block; width: max-content; background: #c8c8c8; color: #333; height: 15px; line-height: 17px; white-space: pre; }
.notes mark:first-child { margin-top: -5px; }
.vscroll { position: absolute; right: 1px; top: 0; width: 6px; height: 53px; border-radius: 3px; background: #000; }
.vscroll i { height: 18px; border-radius: 3px; background: #999; }
.hscroll { width: 1346px; height: 6px; border-radius: 3px; background: #000; }
.hscroll i { width: 159px; height: 6px; border-radius: 3px; background: #999; }
.status { height: 25px; width: 1356px; background: #fff; border: 1px solid #b5bcc7; border-top-color: #e4e4e4; padding-top: 4px; }

/* downloads */
.downloads { flex: 1; display: flex; align-items: center; border-top: 2px solid #dddfe2; background: #fff; }
.dl { width: 233px; height: 44px; display: flex; align-items: center; padding-left: 16px; border-right: 1px solid #c7c9cc; font-size: 12px; color: #44474a; }
.dl:first-child { width: 237px; padding-left: 20px; }
.dl span { margin-left: 12px; width: 159px; letter-spacing: -.1px; }
.showall { margin-left: auto; width: 78px; height: 32px; padding: 0; background: #fff; border: 1px solid #d9dce0; border-radius: 4px; color: #1a6fd8; font: 600 11.500px "Open Sans", sans-serif; }
.close { margin: 0 12px; }
.taskbar { height: 4px; background: #1c1d1f; display: flex; }
.green { width: 4px; background: #3f6b3b; margin-left: 374px; } .dark { width: 24px; background: #303234; } .light { width: 36px; margin-left: 79px; background: #4a4b4d; }

/* dialog window */
.dialog { position: absolute; left: 494px; top: 275px; width: 386px; height: 188px; background: #fff; border: 1px solid #878787; box-shadow: 0 3px 10px rgba(0,0,0,.4); padding: 6px 6px 6px 16px; font-size: 11.600px; line-height: 16px; color: #000; }
.dtitle { display: flex; margin-left: -8px; color: #969696; height: 16px; letter-spacing: -.03px; }
.dtitle span { margin-left: 5px; }
.dialog strong { display: block; margin-top: 25px; font-weight: 600; letter-spacing: -.1px; white-space: nowrap; }
.dialog p { margin: 16px 0 0; white-space: nowrap; letter-spacing: -.07px; }
.dialog .p2 { margin-top: 14px; letter-spacing: -.15px; }
.dbtns { display: flex; justify-content: flex-end; gap: 10px; margin-top: 17px; }
.dbtns button { width: 75px; height: 23px; padding: 0; font-size: 12px; line-height: 20px; background: #eeeef0; border: 1px solid #c7c9cb; color: #222; }
.dbtns .no { background: #cbcbcb; border-color: #989898; color: #555; }
```
